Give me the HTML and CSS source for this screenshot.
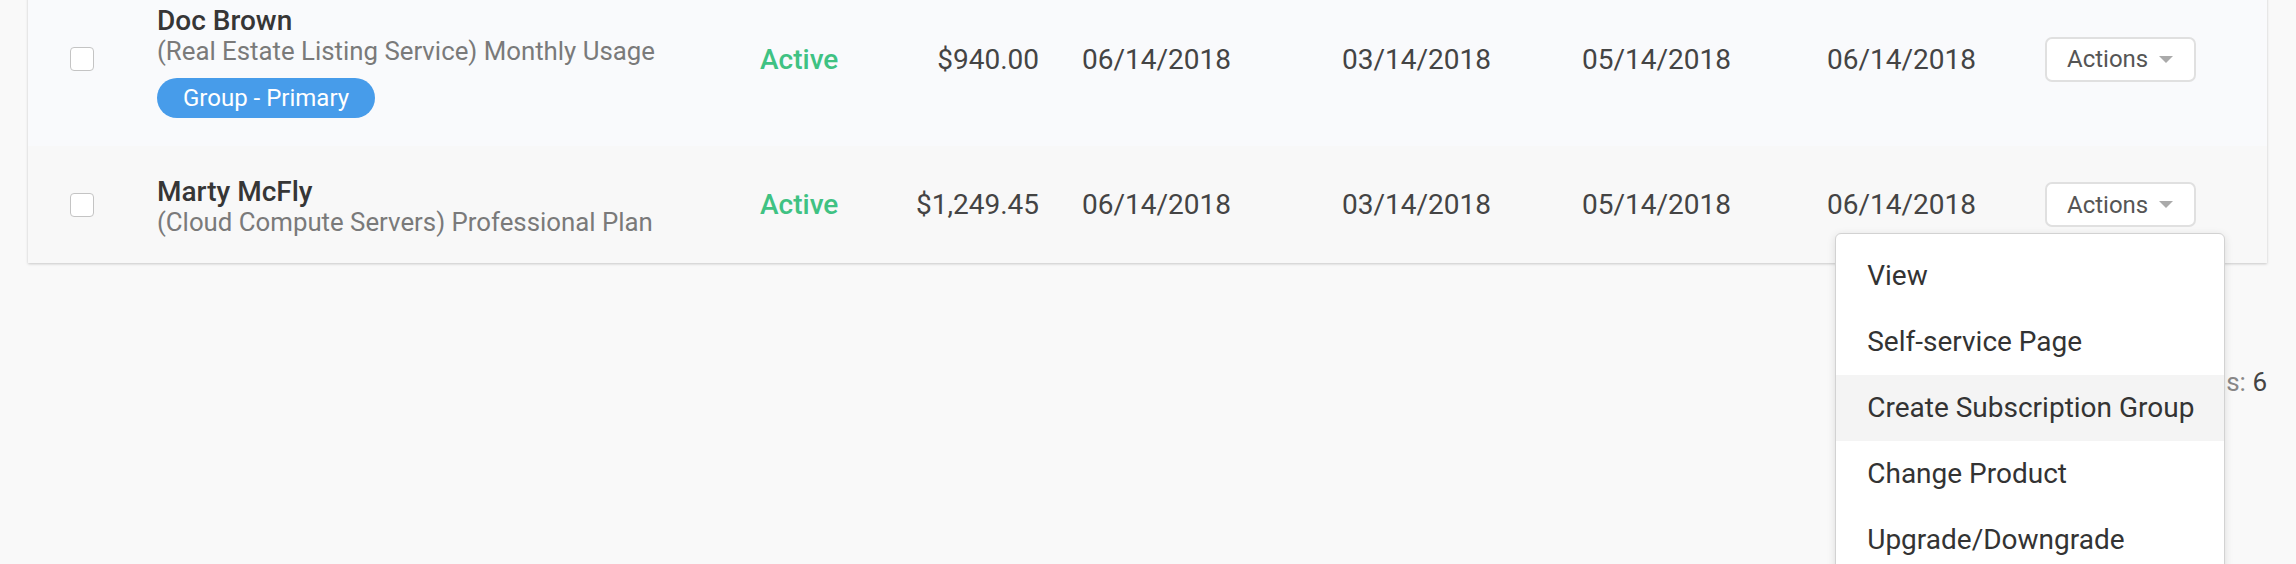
FILE: index.html
```html
<!DOCTYPE html>
<html lang="en">
<head>
    <meta charset="UTF-8">
    <meta name="viewport" content="width=device-width, initial-scale=1.0">
    <title>Subscriptions</title>
    <link rel="stylesheet" href="styles.css">
</head>
<body>
    <div class="page">
        <div class="card">
            <table class="subs">
                <colgroup>
                    <col class="col-check">
                    <col class="col-name">
                    <col class="col-status">
                    <col class="col-price">
                    <col class="col-date1">
                    <col class="col-date2">
                    <col class="col-date3">
                    <col class="col-date4">
                    <col class="col-actions">
                </colgroup>
                <tbody>
                    <tr class="row row-group">
                        <td class="cell-check"><input type="checkbox" class="check"></td>
                        <td>
                            <div class="name-block">
                                <div class="customer">Doc Brown</div>
                                <div class="plan">(Real Estate Listing Service) Monthly Usage</div>
                                <span class="badge">Group - Primary</span>
                            </div>
                        </td>
                        <td class="status">Active</td>
                        <td class="price">$940.00</td>
                        <td class="date date-first">06/14/2018</td>
                        <td class="date">03/14/2018</td>
                        <td class="date">05/14/2018</td>
                        <td class="date">06/14/2018</td>
                        <td>
                            <div class="actions">
                                <button class="actions-btn">Actions <span class="caret"></span></button>
                            </div>
                        </td>
                    </tr>
                    <tr class="row row-plain">
                        <td class="cell-check"><input type="checkbox" class="check"></td>
                        <td>
                            <div class="name-block">
                                <div class="customer">Marty McFly</div>
                                <div class="plan">(Cloud Compute Servers) Professional Plan</div>
                            </div>
                        </td>
                        <td class="status">Active</td>
                        <td class="price">$1,249.45</td>
                        <td class="date date-first">06/14/2018</td>
                        <td class="date">03/14/2018</td>
                        <td class="date">05/14/2018</td>
                        <td class="date">06/14/2018</td>
                        <td>
                            <div class="actions">
                                <button class="actions-btn">Actions <span class="caret"></span></button>
                                <ul class="menu">
                                    <li>View</li>
                                    <li>Self-service Page</li>
                                    <li class="active">Create Subscription Group</li>
                                    <li>Change Product</li>
                                    <li>Upgrade/Downgrade</li>
                                    <li>Cancel</li>
                                </ul>
                            </div>
                        </td>
                    </tr>
                </tbody>
            </table>
        </div>

        <div class="summary">
            <span class="summary-label">Total Subscriptions:</span> <span class="summary-value">6</span>
        </div>
    </div>
</body>
</html>
```

FILE: styles.css
```css
html, body {
    min-height: 100%;
}
body {
    margin: 0;
    min-height: 700px;
    font-family: Roboto, "Liberation Sans", Arial, sans-serif;
    color: #333;
    background-color: #f9f9f9;
}
.page {
    padding: 0 29px 0 28px;
}
.card {
    margin-top: -28px;
    background-color: #fff;
    box-shadow: 0 1px 3px rgba(0,0,0,0.13), 0 1px 2px rgba(0,0,0,0.08);
}
.subs {
    width: 100%;
    table-layout: fixed;
    border-collapse: collapse;
}
.col-check { width: 129px; }
.col-name { width: 603px; }
.col-status { width: 140px; }
.col-price { width: 139px; }
.col-date1 { width: 303px; }
.col-date2 { width: 240px; }
.col-date3 { width: 245px; }
.col-date4 { width: 218px; }
.col-actions { width: 222px; }

.subs td {
    padding: 0;
    vertical-align: middle;
    font-size: 28px;
    line-height: 31px;
    white-space: nowrap;
}
.row-group {
    background-color: #f9fafc;
}
.row-group td {
    height: 174px;
}
.row-plain {
    background-color: #f8f8f8;
}
.row-plain td {
    height: 117px;
}
.subs td.cell-check {
    padding-left: 42px;
}
.check {
    display: block;
    -webkit-appearance: none;
    appearance: none;
    width: 24px;
    height: 24px;
    margin: 0;
    border: 1.5px solid #c4c4c4;
    border-radius: 4px;
    background-color: #fff;
    box-sizing: border-box;
}
.name-block {
    padding-top: 5px;
}
.customer {
    font-weight: 500;
    color: #363636;
}
.plan {
    font-size: 25.8px;
    color: #7a7a7a;
}
.badge {
    display: block;
    width: fit-content;
    margin-top: 11px;
    height: 40px;
    line-height: 40px;
    padding: 0 26px;
    border-radius: 20px;
    background-color: #479cea;
    color: #fff;
    font-size: 24px;
}
.status {
    color: #3fc283;
    font-weight: 500;
}
.price {
    text-align: right;
    color: #444;
}
.date {
    color: #444;
}
.subs td.date-first {
    padding-left: 43px;
}
.actions {
    position: relative;
    width: fit-content;
}
.actions-btn {
    display: flex;
    align-items: center;
    height: 45px;
    padding: 0 21px 0 20px;
    border: 2px solid #e0e0e0;
    border-radius: 7px;
    background-color: #fff;
    color: #555;
    font-family: inherit;
    font-size: 24px;
    cursor: pointer;
}
.caret {
    display: inline-block;
    margin-left: 11px;
    border-left: 7.5px solid transparent;
    border-right: 7.5px solid transparent;
    border-top: 7px solid #aaa;
}
.menu {
    position: absolute;
    top: calc(100% + 6px);
    right: -29px;
    z-index: 10;
    width: 390px;
    box-sizing: border-box;
    margin: 0;
    padding: 9px 0;
    list-style: none;
    background-color: #fff;
    border: 1px solid #d2d2d2;
    border-radius: 6px;
    box-shadow: 0 2px 8px rgba(0,0,0,0.12);
}
.menu li {
    height: 66px;
    line-height: 66px;
    padding-left: 31px;
    font-size: 28px;
    color: #333;
}
.menu li.active {
    background-color: #f4f4f4;
}
.summary {
    padding-top: 104px;
    text-align: right;
    font-size: 26px;
    line-height: 30px;
}
.summary-label {
    color: #888;
}
.summary-value {
    color: #444;
}
```
